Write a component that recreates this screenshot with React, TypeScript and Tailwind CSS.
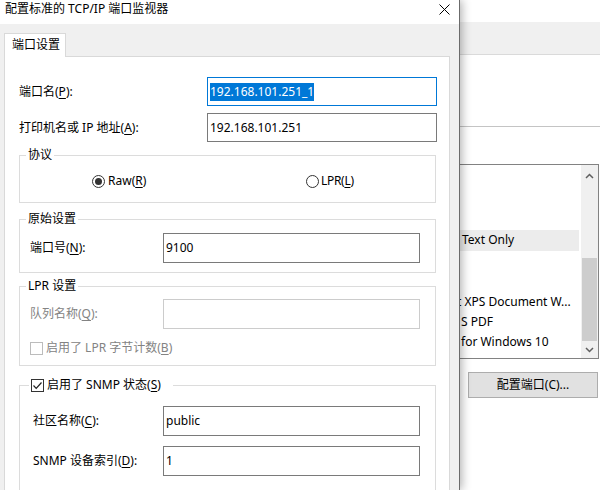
import type { ReactNode } from "react";

function Mn({ children }: { children: ReactNode }) {
  return <span className="underline underline-offset-[2px]">{children}</span>;
}

function Radio({ checked }: { checked?: boolean }) {
  return (
    <span className="flex size-[13px] items-center justify-center rounded-full border border-[#333333] bg-white">
      {checked && <span className="size-[7px] rounded-full bg-[#333333]" />}
    </span>
  );
}

function Field({
  value,
  width,
  height,
  disabled,
}: {
  value?: string;
  width: string;
  height: string;
  disabled?: boolean;
}) {
  return (
    <div
      className={
        disabled
          ? `${width} ${height} border border-[#cccccc] bg-white`
          : `${width} ${height} flex items-center border border-[#7a7a7a] bg-white pl-[2px]`
      }
    >
      {value}
    </div>
  );
}

function Chevron({ down }: { down?: boolean }) {
  return (
    <svg width="9" height="6" viewBox="0 0 9 6" className={down ? "rotate-180" : ""}>
      <path d="M1 5 L4.5 1.5 L8 5" fill="none" stroke="#606060" strokeWidth="1.5" />
    </svg>
  );
}

const rows = ["", "", "", "Text Only", "", "", "XPS", "S PDF", "for Windows 10"];

export default function App() {
  return (
    <div className="flex h-[490px] w-[600px] overflow-hidden bg-white font-['Noto_Sans','Noto_Sans_CJK_SC',sans-serif] text-[12px] leading-4 text-black">
      {/* dialog */}
      <div className="relative z-10 flex w-[460px] shrink-0 flex-col border-r border-[#6b6b6b] bg-[#f0f0f0] shadow-[2px_0_9px_rgba(0,0,0,0.3)]">
        <div className="flex h-[24px] shrink-0 items-start justify-between bg-white pl-[5px] pr-[9px] pt-[1px]">
          <span>配置标准的 TCP/IP 端口监视器</span>
          <svg width="11" height="11" viewBox="0 0 11 11" className="mt-[3px]">
            <path d="M0.5 0.5 L10.5 10.5 M10.5 0.5 L0.5 10.5" stroke="#000" strokeWidth="1" />
          </svg>
        </div>

        <div className="flex flex-1 flex-col pl-[4px] pr-[9px] pt-[9px]">
          <div className="flex">
            <div className="relative z-10 -mb-px h-[24px] w-[62px] border border-b-0 border-[#d9d9d9] bg-white pl-[7px] pt-[3px]">
              端口设置
            </div>
          </div>

          <div className="flex-1 border border-[#d9d9d9] bg-white pl-[14px] pr-[12px] pt-[20px]">
            <div className="flex h-[29px] items-center">
              <div className="w-[188px]">
                端口名(<Mn>P</Mn>):
              </div>
              <div className="flex h-[29px] w-[230px] items-center border border-[#0078d7] pl-[2px]">
                <span className="bg-[#0078d7] leading-[18px] text-white">192.168.101.251_1</span>
              </div>
            </div>
            <div className="mt-[7px] flex h-[29px] items-center">
              <div className="w-[188px]">
                打印机名或 IP 地址(<Mn>A</Mn>):
              </div>
              <Field value="192.168.101.251" width="w-[230px]" height="h-[29px]" />
            </div>

            <fieldset className="mr-[1px] mt-[5px] border border-[#dcdcdc]">
              <legend className="ml-[6px] px-[2px] leading-4">协议</legend>
              <div className="pb-[13px] pl-[72px] pt-[10px]">
                <div className="flex h-4 items-center">
                  <div className="flex w-[214px] items-center gap-[3px]">
                    <Radio checked />
                    <span>
                      Raw(<Mn>R</Mn>)
                    </span>
                  </div>
                  <div className="flex items-center gap-[2px]">
                    <Radio />
                    <span className="tracking-[-0.3px]">
                      LPR(<Mn>L</Mn>)
                    </span>
                  </div>
                </div>
              </div>
            </fieldset>

            <fieldset className="mr-[1px] mt-[8px] border border-[#dcdcdc]">
              <legend className="ml-[6px] px-[2px] leading-4">原始设置</legend>
              <div className="flex items-center pb-[9px] pl-[10px] pt-[6px]">
                <div className="w-[133px]">
                  端口号(<Mn>N</Mn>):
                </div>
                <Field value="9100" width="w-[257px]" height="h-[30px]" />
              </div>
            </fieldset>

            <fieldset className="mr-[1px] mt-[5px] border border-[#dcdcdc]">
              <legend className="ml-[6px] px-[2px] leading-4">LPR 设置</legend>
              <div className="pb-[9px] pl-[10px] pt-[5px]">
                <div className="flex items-center">
                  <div className="w-[133px] text-[#838383]">
                    队列名称(<Mn>Q</Mn>):
                  </div>
                  <Field width="w-[257px]" height="h-[30px]" disabled />
                </div>
                <div className="mt-[11px] flex h-4 items-center gap-[3px] text-[#838383]">
                  <span className="size-[13px] border border-[#bcbcbc] bg-white" />
                  <span>
                    启用了 LPR 字节计数(<Mn>B</Mn>)
                  </span>
                </div>
              </div>
            </fieldset>

            <fieldset className="mr-[1px] mt-[11px] border border-[#dcdcdc]">
              <legend className="ml-[9px] flex h-4 items-center gap-[3px] pl-[2px] pr-[12px]">
                <span className="flex size-[13px] items-center justify-center border border-[#333333] bg-white">
                  <svg width="11" height="11" viewBox="0 0 11 11">
                    <path d="M1.5 5.5 L4.2 8.3 L9.5 2.5" fill="none" stroke="#222" strokeWidth="1.2" />
                  </svg>
                </span>
                <span>
                  启用了 SNMP 状态(<Mn>S</Mn>)
                </span>
              </legend>
              <div className="pb-[20px] pl-[13px] pt-[13px]">
                <div className="flex items-center">
                  <div className="w-[130px]">
                    社区名称(<Mn>C</Mn>):
                  </div>
                  <Field value="public" width="w-[257px]" height="h-[30px]" />
                </div>
                <div className="mt-[10px] flex items-center">
                  <div className="w-[130px]">
                    SNMP 设备索引(<Mn>D</Mn>):
                  </div>
                  <Field value="1" width="w-[257px]" height="h-[30px]" />
                </div>
              </div>
            </fieldset>
          </div>
        </div>
      </div>

      {/* window behind */}
      <div className="flex w-[140px] shrink-0 flex-col bg-white">
        <div className="h-[22px]" />
        <div className="h-[33px] border-b border-[#dadada] bg-[#f0f0f0]" />
        <div className="h-[72px] border-b border-[#c4c4c4]" />
        <div className="h-[37px]" />
        <div className="mr-[1px] flex h-[195px] border-y border-r border-[#828282]">
          <div className="w-[119px] overflow-hidden pt-[4px]">
            {rows.map((r, i) => (
              <div
                key={i}
                className={
                  r === "Text Only"
                    ? "flex h-[20.4px] items-center whitespace-nowrap bg-[#ececec] pl-[2px]"
                    : r === "XPS"
                      ? "-ml-[3px] flex h-[20.4px] items-center whitespace-nowrap"
                      : "flex h-[20.4px] items-center whitespace-nowrap pl-[1px]"
                }
              >
                {r === "XPS" ? "t XPS Document W..." : r}
              </div>
            ))}
          </div>
          <div className="ml-[2px] flex w-[17px] flex-col bg-[#f0f0f0]">
            <div className="flex h-[17px] items-center justify-center pt-[4px]">
              <Chevron />
            </div>
            <div className="flex-1" />
            <div className="mx-[1px] h-[83px] bg-[#cdcdcd]" />
            <div className="flex h-[17px] items-center justify-center">
              <Chevron down />
            </div>
          </div>
        </div>
        <button className="ml-[8px] mr-[2px] mt-[13px] h-[26px] border border-[#adadad] bg-[#e1e1e1] text-[12px]">
          配置端口(C)...
        </button>
      </div>
    </div>
  );
}
